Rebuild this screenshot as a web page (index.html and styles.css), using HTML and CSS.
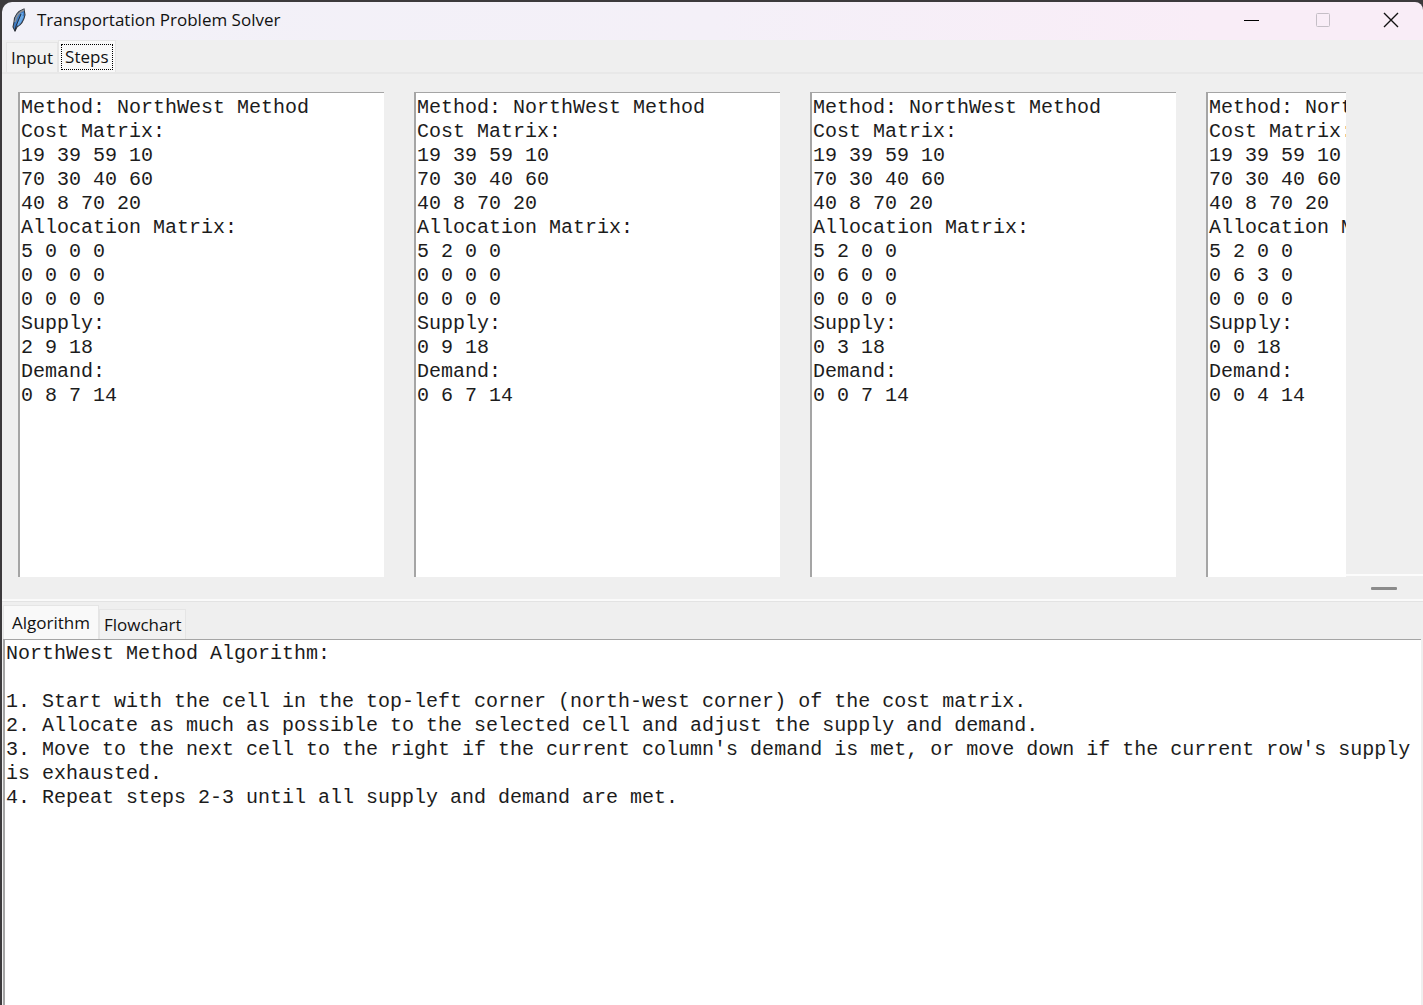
FILE: index.html
```html
<!DOCTYPE html>
<html lang="en">
<head>
<meta charset="utf-8">
<title>Transportation Problem Solver</title>
<link rel="stylesheet" href="styles.css">
</head>
<body>
<div class="window">
  <header class="titlebar">
    <svg class="feather" viewBox="0 0 16 24" aria-hidden="true">
      <path d="M13 1 C7 3 3 8 3 14 L2 19 L4 23 L6 19 C10 17 13 12 14 7 Z" fill="#3f7cc4" stroke="#33363c" stroke-width="1.1"/>
      <path d="M13 2 C8 4 5 8 4 14" fill="none" stroke="#8f9194" stroke-width="1.4"/>
      <path d="M11.500 5 L7 17 M12 8 L8.500 15" fill="none" stroke="#6aa9e6" stroke-width="1.800"/>
      <path d="M10 6 L5 18 L4 23" fill="none" stroke="#20242c" stroke-width="0.900"/>
    </svg>
    <h1 class="title">Transportation Problem Solver</h1>
    <div class="controls">
      <button class="control" aria-label="Minimize"><svg viewBox="0 0 16 16"><path d="M0 8.5H15" stroke="#000"/></svg></button>
      <button class="control" aria-label="Maximize" disabled><svg viewBox="0 0 16 16"><rect x="1.5" y="1.500" width="13" height="13" rx="1" fill="none" stroke="#c5bec6"/></svg></button>
      <button class="control" aria-label="Close"><svg viewBox="0 0 16 16"><path d="M1 1L15 15M15 1L1 15" stroke="#111" stroke-width="1.4"/></svg></button>
    </div>
  </header>

  <section class="notebook">
    <div class="tabs" role="tablist" aria-label="Solver">
      <button class="tab" role="tab" aria-selected="false">Input</button>
      <button class="tab selected" role="tab" aria-selected="true"><span class="focus">Steps</span></button>
    </div>
    <div class="page">
      <div class="steps">
<textarea class="text step" aria-label="Step 1" readonly rows="20">Method: NorthWest Method
Cost Matrix:
19 39 59 10
70 30 40 60
40 8 70 20
Allocation Matrix:
5 0 0 0
0 0 0 0
0 0 0 0
Supply:
2 9 18
Demand:
0 8 7 14</textarea>
<textarea class="text step" aria-label="Step 2" readonly rows="20">Method: NorthWest Method
Cost Matrix:
19 39 59 10
70 30 40 60
40 8 70 20
Allocation Matrix:
5 2 0 0
0 0 0 0
0 0 0 0
Supply:
0 9 18
Demand:
0 6 7 14</textarea>
<textarea class="text step" aria-label="Step 3" readonly rows="20">Method: NorthWest Method
Cost Matrix:
19 39 59 10
70 30 40 60
40 8 70 20
Allocation Matrix:
5 2 0 0
0 6 0 0
0 0 0 0
Supply:
0 3 18
Demand:
0 0 7 14</textarea>
<textarea class="text step" aria-label="Step 4" readonly rows="20">Method: NorthWest Method
Cost Matrix:
19 39 59 10
70 30 40 60
40 8 70 20
Allocation Matrix:
5 2 0 0
0 6 3 0
0 0 0 0
Supply:
0 0 18
Demand:
0 0 4 14</textarea>
      </div>
      <div class="side"></div>
    </div>
    <div class="scrollbar"><span class="thumb"></span></div>
  </section>

  <section class="notebook details">
    <div class="tabs" role="tablist" aria-label="Method details">
      <button class="tab selected" role="tab" aria-selected="true">Algorithm</button>
      <button class="tab" role="tab" aria-selected="false">Flowchart</button>
    </div>
<textarea class="text algorithm" aria-label="Algorithm" readonly>NorthWest Method Algorithm:

1. Start with the cell in the top-left corner (north-west corner) of the cost matrix.
2. Allocate as much as possible to the selected cell and adjust the supply and demand.
3. Move to the next cell to the right if the current column's demand is met, or move down if the current row's supply is exhausted.
4. Repeat steps 2-3 until all supply and demand are met.</textarea>
  </section>
</div>
</body>
</html>
```
FILE: styles.css
```css
* {
  box-sizing: border-box;
}

body {
  margin: 0;
  background: #3c3a3c;
  color: #111;
  font-family: "Open Sans", "Noto Sans", sans-serif;
}

button {
  margin: 0;
  padding: 0;
  border: 0;
  background: none;
  color: inherit;
  font: inherit;
}

.window {
  display: flex;
  flex-direction: column;
  height: 100vh;
  padding: 2px 0 0 2px;
}

.titlebar {
  display: flex;
  align-items: center;
  height: 38px;
  padding: 0 0 2px 9px;
  border-radius: 10px 8px 0 0;
  background: linear-gradient(90deg, #f2f1f8, #f4f0f8 50%, #f9edf7 85%);
}

.feather {
  width: 16px;
  height: 24px;
}

.title {
  margin: 0 auto 0 10px;
  font-size: 17px;
  font-weight: 400;
  line-height: 24px;
}

.controls {
  display: flex;
}

.control {
  display: grid;
  place-items: center;
  width: 70px;
  height: 36px;
}

.control svg {
  width: 16px;
  height: 16px;
}

.control:last-child {
  width: 64px;
}

.control:nth-child(2) {
  width: 72px;
}

.notebook {
  display: flex;
  flex-direction: column;
  background: #efefef;
}

.tabs {
  display: flex;
  align-items: flex-end;
  height: 34px;
  padding-left: 4px;
  border-bottom: 2px solid #e8e8e8;
}

.tab {
  height: 30px;
  padding: 0 4px;
  border: 1px solid #e5e5e5;
  border-bottom: 0;
  background: #f2f2f2;
  font-size: 17px;
  line-height: 30px;
}

.tab.selected {
  height: 32px;
  padding: 0 2px;
  background: #f9f9f9;
}

.focus {
  display: block;
  padding: 0 3px;
  border: 1px dotted #000;
  line-height: 24px;
}

.page {
  display: flex;
  padding-top: 18px;
}

.steps {
  display: flex;
  flex: 1;
  gap: 30px;
  min-width: 0;
  padding-left: 16px;
  overflow: hidden;
}

.side {
  width: 77px;
  margin-bottom: 1px;
  border-bottom: 2px solid #fcfcfc;
}

.text {
  display: block;
  margin: 0;
  padding: 2px 1px 0;
  border: 0 solid #a5a5a5;
  border-width: 1px 0 0 2px;
  border-radius: 0;
  outline: 0;
  background: #fff;
  color: #1c1c1c;
  font: 20px/24px "Liberation Mono", "Courier New", monospace;
  overflow: hidden;
  resize: none;
}

.step {
  flex: none;
  width: 366px;
  padding-top: 3px;
  padding-bottom: 1px;
}

.scrollbar {
  display: flex;
  justify-content: flex-end;
  align-items: center;
  height: 24px;
  padding-right: 26px;
  border-bottom: 2px solid #fafafa;
}

.thumb {
  width: 26px;
  height: 3px;
  border-radius: 1px;
  background: #8b8b8b;
}

.details {
  flex: 1;
  min-height: 0;
  padding: 0 2px 0 1px;
  border-top: 1px solid #e3e3e3;
}

.details .tabs {
  height: 37px;
  padding-left: 0;
  border-bottom: 0;
}

.details .tab.selected {
  height: 34px;
  padding: 0 8px;
}

.algorithm {
  flex: 1;
  width: 100%;
}
```
